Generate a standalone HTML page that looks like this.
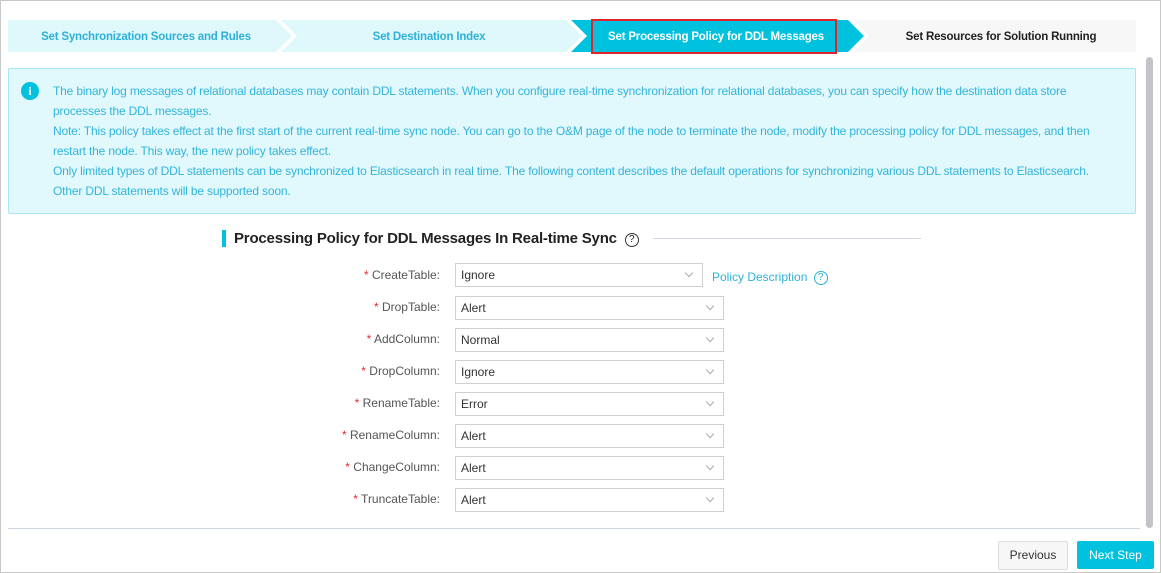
<!DOCTYPE html><html><head><style>
body{margin:0;width:1161px;height:573px;overflow:hidden;font-family:"Liberation Sans",Arial,sans-serif;background:#fff;position:relative}
.frame{position:absolute;left:0;top:0;width:1159px;height:571px;border:1px solid #c8c8c8}
.step{position:absolute;top:20px;height:32px;line-height:35px;font-size:11.5px;letter-spacing:-0.2px;font-weight:bold;text-align:center}
.info{position:absolute;left:8px;top:68px;width:1126px;height:144px;background:#e1f8fc;border:1px solid #a8e6f2;border-radius:2px}
.info p{margin:0;position:absolute;left:44px;top:12px;width:1060px;font-size:12px;letter-spacing:-0.17px;line-height:20px;color:#33b5dc}
.ic{position:absolute;left:12px;top:13px;width:18px;height:18px;border-radius:50%;background:#00c1de;color:#fff;font-size:12px;font-weight:bold;text-align:center;line-height:18px;font-family:"Liberation Serif",serif}
.h{position:absolute;left:222px;top:230px;border-left:4px solid #00c1de;padding-left:8px;font-size:15px;letter-spacing:-0.2px;font-weight:bold;color:#222;height:17px;line-height:17px}
.q{display:inline-block;width:12px;height:12px;border:1px solid #333;border-radius:50%;font-size:10px;font-weight:normal;line-height:12px;text-align:center;vertical-align:1px;margin-left:8px;letter-spacing:0}
.lbl{position:absolute;width:200px;left:240px;text-align:right;font-size:12px;color:#555}
.lbl b{color:#e0302f;font-weight:normal}
.sel{position:absolute;left:455px;width:262px;height:22px;border:1px solid #d0d0d0;font-size:12px;color:#333;line-height:22px;padding-left:5px;background:#fff}
.sel:after{content:"";position:absolute;right:10px;top:6px;width:5px;height:5px;border-right:1px solid #aaa;border-bottom:1px solid #aaa;transform:rotate(45deg)}
.btn{position:absolute;top:541px;height:27px;line-height:27px;font-size:12px;text-align:center;border-radius:2px}
</style></head><body>
<div class="frame"></div>
<svg style="position:absolute;left:8px;top:20px" width="1128" height="32">
<polygon points="0,0 268,0 284,16 268,32 0,32" fill="#dff8fc"/>
<polygon points="273,0 558,0 574,16 558,32 273,32 289,16" fill="#dff8fc"/>
<polygon points="563,0 840,0 856,16 840,32 563,32 579,16" fill="#00c1de"/>
<polygon points="845,0 1128,0 1128,32 845,32 861,16" fill="#f7f7f7"/>
</svg>
<div class="step" style="left:8px;width:276px;color:#2eb1d8">Set Synchronization Sources and Rules</div>
<div class="step" style="left:290px;width:278px;color:#2eb1d8">Set Destination Index</div>
<div class="step" style="left:580px;width:272px;color:#fff">Set Processing Policy for DDL Messages</div>
<div style="position:absolute;left:591px;top:19px;width:246px;height:35px;border:2px solid #e0242c;box-sizing:border-box"></div>
<div class="step" style="left:866px;width:270px;color:#222">Set Resources for Solution Running</div>
<div class="info"><div class="ic">i</div><p>The binary log messages of relational databases may contain DDL statements. When you configure real-time synchronization for relational databases, you can specify how the destination data store<br>processes the DDL messages.<br>Note: This policy takes effect at the first start of the current real-time sync node. You can go to the O&amp;M page of the node to terminate the node, modify the processing policy for DDL messages, and then<br>restart the node. This way, the new policy takes effect.<br>Only limited types of DDL statements can be synchronized to Elasticsearch in real time. The following content describes the default operations for synchronizing various DDL statements to Elasticsearch.<br>Other DDL statements will be supported soon.</p></div>
<div style="position:absolute;left:1146px;top:57px;width:7px;height:471px;background:#c4c4c8;border-radius:4px"></div>
<div class="h">Processing Policy for DDL Messages In Real-time Sync<span class="q">?</span></div>
<div style="position:absolute;left:653px;top:238px;width:268px;height:1px;background:#d8d8e0"></div>

<div class="lbl" style="top:268px"><b>*</b> CreateTable:</div><div class="sel" style="top:263px;width:241px">Ignore</div>
<div style="position:absolute;left:712px;top:270px;font-size:12px;color:#2eb1d8">Policy Description <span class="q" style="border-color:#2eb1d8;color:#2eb1d8;margin-left:3px">?</span></div>
<div class="lbl" style="top:300px"><b>*</b> DropTable:</div><div class="sel" style="top:296px">Alert</div>
<div class="lbl" style="top:332px"><b>*</b> AddColumn:</div><div class="sel" style="top:328px">Normal</div>
<div class="lbl" style="top:364px"><b>*</b> DropColumn:</div><div class="sel" style="top:360px">Ignore</div>
<div class="lbl" style="top:396px"><b>*</b> RenameTable:</div><div class="sel" style="top:392px">Error</div>
<div class="lbl" style="top:428px"><b>*</b> RenameColumn:</div><div class="sel" style="top:424px">Alert</div>
<div class="lbl" style="top:460px"><b>*</b> ChangeColumn:</div><div class="sel" style="top:456px">Alert</div>
<div class="lbl" style="top:492px"><b>*</b> TruncateTable:</div><div class="sel" style="top:488px">Alert</div>

<div style="position:absolute;left:8px;top:528px;width:1132px;height:1px;background:#cfd3e6"></div>
<div class="btn" style="left:998px;width:68px;border:1px solid #ddd;background:#f7f7f7;color:#333">Previous</div>
<div class="btn" style="left:1077px;width:77px;top:541px;height:28px;line-height:28px;background:#00c1de;color:#fff">Next Step</div>
</body></html>
